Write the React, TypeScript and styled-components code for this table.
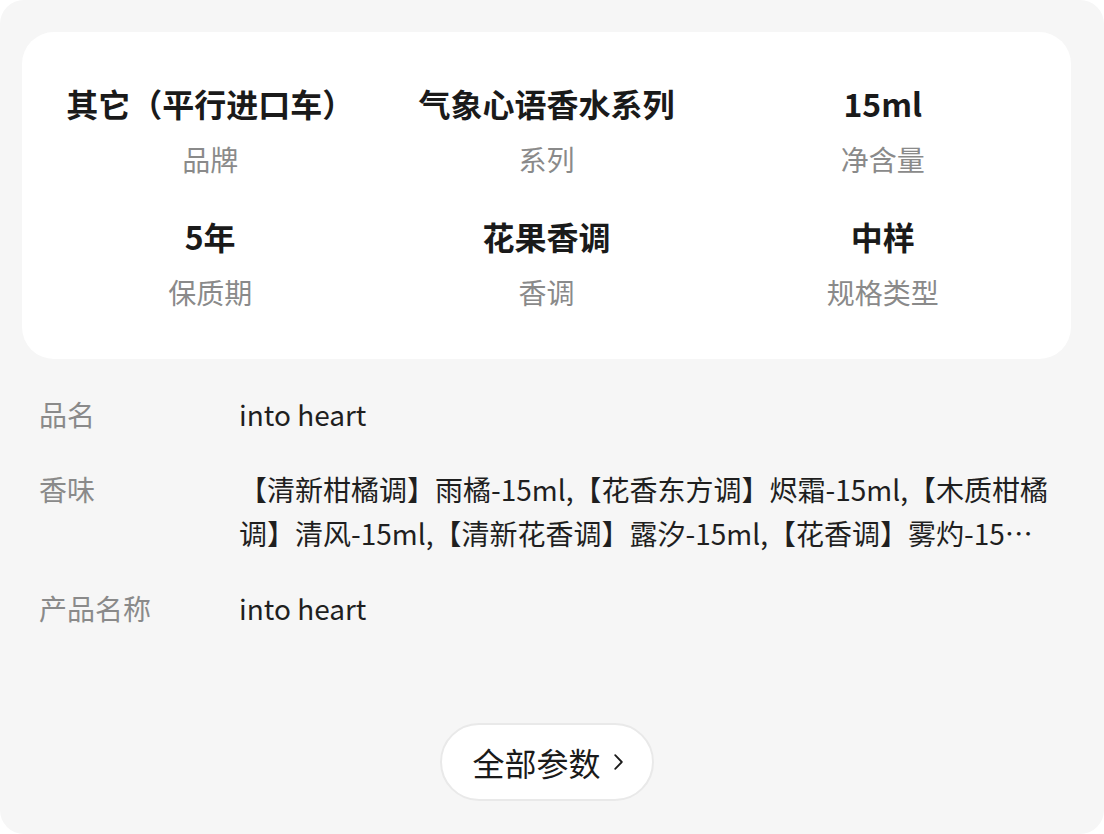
import React from 'react';
import styled, { createGlobalStyle } from 'styled-components';

const GlobalStyle = createGlobalStyle`
  html, body {
    margin: 0;
    padding: 0;
    background: #ffffff;
  }
  body {
    font-family: "Noto Sans CJK SC", "Noto Sans", sans-serif;
  }
`;

const Panel = styled.div`
  width: 1104px;
  height: 834px;
  box-sizing: border-box;
  background: #f6f6f6;
  border-radius: 24px;
  padding: 32px 33px 0 22px;
  display: flex;
  flex-direction: column;
`;

const Card = styled.div`
  background: #ffffff;
  border-radius: 32px;
  padding: 49px 20px 47px;
  display: grid;
  grid-template-columns: repeat(3, 1fr);
  row-gap: 35px;
`;

const Cell = styled.div`
  display: flex;
  flex-direction: column;
  align-items: center;
  gap: 14px;
`;

const CellValue = styled.div`
  font-size: 32px;
  line-height: 44px;
  font-weight: 700;
  color: #1a1a1a;
  white-space: nowrap;
`;

const CellLabel = styled.div`
  font-size: 28px;
  line-height: 40px;
  color: #8a8a8a;
`;

const Rows = styled.div`
  display: flex;
  flex-direction: column;
  gap: 31px;
  padding: 33px 21px 0 17px;
`;

const Row = styled.div`
  display: flex;
  font-size: 28px;
  line-height: 44px;
`;

const RowLabel = styled.div`
  flex: 0 0 200px;
  color: #8a8a8a;
`;

const RowValue = styled.div<{ $clamp?: number }>`
  flex: 1;
  min-width: 0;
  color: #1f1f1f;
  overflow: hidden;
  display: -webkit-box;
  -webkit-box-orient: vertical;
  -webkit-line-clamp: ${p => p.$clamp ?? 1};
  word-break: break-all;
`;

const Footer = styled.div`
  display: flex;
  justify-content: center;
  margin-top: 93px;
`;

const MoreButton = styled.button`
  width: 214px;
  height: 78px;
  box-sizing: border-box;
  border: 2px solid #e9e9e9;
  border-radius: 39px;
  background: #ffffff;
  display: flex;
  align-items: center;
  justify-content: center;
  gap: 13px;
  padding: 0 0 0 2px;
  font-family: inherit;
  font-size: 32px;
  font-weight: 400;
  color: #1a1a1a;
  cursor: pointer;
`;

const specs = [
  { value: '其它（平行进口车）', label: '品牌' },
  { value: '气象心语香水系列', label: '系列' },
  { value: '15ml', label: '净含量' },
  { value: '5年', label: '保质期' },
  { value: '花果香调', label: '香调' },
  { value: '中样', label: '规格类型' },
];

const rows = [
  { label: '品名', value: 'into heart', clamp: 1 },
  {
    label: '香味',
    value:
      '【清新柑橘调】雨橘-15ml,【花香东方调】烬霜-15ml,【木质柑橘调】清风-15ml,【清新花香调】露汐-15ml,【花香调】雾灼-15ml,【木质花香调】晚樱-15ml',
    clamp: 2,
  },
  { label: '产品名称', value: 'into heart', clamp: 1 },
];

export default function App() {
  return (
    <>
      <GlobalStyle />
      <Panel>
        <Card>
          {specs.map(s => (
            <Cell key={s.label}>
              <CellValue>{s.value}</CellValue>
              <CellLabel>{s.label}</CellLabel>
            </Cell>
          ))}
        </Card>
        <Rows>
          {rows.map(r => (
            <Row key={r.label}>
              <RowLabel>{r.label}</RowLabel>
              <RowValue $clamp={r.clamp}>{r.value}</RowValue>
            </Row>
          ))}
        </Rows>
        <Footer>
          <MoreButton>
            全部参数
            <svg width="9" height="16" viewBox="0 0 9 16" fill="none">
              <path d="M1.2 1.2L7.8 8L1.2 14.8" stroke="#1a1a1a" strokeWidth="1.8" strokeLinecap="round" strokeLinejoin="round" />
            </svg>
          </MoreButton>
        </Footer>
      </Panel>
    </>
  );
}
